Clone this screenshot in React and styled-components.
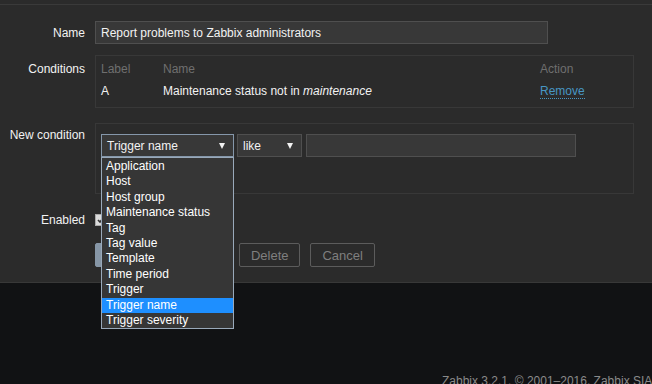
import React from "react";
import styled, { createGlobalStyle } from "styled-components";

const conditionTypes = [
  "Application",
  "Host",
  "Host group",
  "Maintenance status",
  "Tag",
  "Tag value",
  "Template",
  "Time period",
  "Trigger",
  "Trigger name",
  "Trigger severity",
];

const GlobalStyle = createGlobalStyle`
  html, body {
    margin: 0;
    padding: 0;
    background: #111214;
  }
  body {
    font-family: "Liberation Sans", Arial, sans-serif;
    font-size: 12px;
    color: #f2f2f2;
  }
`;

const Page = styled.div`
  width: 652px;
  height: 384px;
  overflow: hidden;
  display: flex;
  flex-direction: column;
`;

const Main = styled.div`
  background: #2b2b2b;
  border-bottom: 1px solid #383838;
  padding-bottom: 15px;
`;

const TopStrip = styled.div`
  height: 4px;
  border-bottom: 1px solid #3a3a3a;
`;

const Form = styled.div`
  padding: 16px 18px 0 0;
`;

const Row = styled.div`
  display: grid;
  grid-template-columns: 85px 1fr;
  column-gap: 10px;
  margin-top: ${(p) => p.top || 0}px;
`;

const Label = styled.div`
  text-align: right;
  line-height: ${(p) => p.lh || 15}px;
  padding-top: ${(p) => p.pt || 0}px;
  color: #f2f2f2;
`;

const TextInput = styled.div`
  box-sizing: border-box;
  width: ${(p) => p.w}px;
  height: 23px;
  line-height: 23px;
  padding: 0 5px;
  background: #383838;
  border: 1px solid #4f4f4f;
  color: #f2f2f2;
  overflow: hidden;
`;

const Box = styled.div`
  border: 1px solid #383838;
  padding: ${(p) => p.pad};
`;

const CondGrid = styled.div`
  display: grid;
  grid-template-columns: 62px 377px 1fr;
  line-height: 15px;
`;

const HeadCell = styled.div`
  color: #6f6f6f;
  padding-top: 6px;
`;

const Cell = styled.div`
  padding-top: 7px;
  padding-bottom: 8px;
`;

const RemoveLink = styled.span`
  color: #4796c4;
  border-bottom: 1px dotted #4796c4;
`;

const Controls = styled.div`
  display: flex;
  align-items: flex-start;
`;

const SelectWrap = styled.div`
  position: relative;
  margin-right: ${(p) => p.mr}px;
`;

const Select = styled.div`
  box-sizing: border-box;
  width: ${(p) => p.w}px;
  height: 23px;
  padding: 1px 5px 0;
  background: #383838;
  border: 1px solid ${(p) => (p.focused ? "#8597aa" : "#4f4f4f")};
  color: #f2f2f2;
  display: flex;
  justify-content: space-between;
  align-items: center;
`;

const Arrow = styled.span`
  width: 0;
  height: 0;
  border-left: 3px solid transparent;
  border-right: 3px solid transparent;
  border-top: 6px solid #f2f2f2;
  margin-right: 3px;
`;

const List = styled.ul`
  position: absolute;
  top: 100%;
  left: 0;
  z-index: 5;
  box-sizing: border-box;
  width: 133px;
  margin: 0;
  padding: 1px 0 0;
  list-style: none;
  background: #363636;
  border: 1px solid #99a9ba;
`;

const Option = styled.li`
  line-height: 15.4px;
  height: 15.4px;
  padding-left: 4px;
  white-space: nowrap;
  color: #fff;
  background: ${(p) => (p.selected ? "#1e8fff" : "transparent")};
`;

const CheckRow = styled.div`
  display: flex;
  align-items: center;
  height: 16px;
`;

const Checkbox = styled.span`
  box-sizing: border-box;
  width: 12px;
  height: 12px;
  background: #dcdcdc;
  border: 1px solid #aaa;
  display: flex;
  align-items: center;
  justify-content: center;
`;

const Buttons = styled.div`
  display: flex;
  gap: 10px;
`;

const Button = styled.div`
  box-sizing: border-box;
  height: 24px;
  line-height: 23px;
  padding: 0 11px;
  font-size: 13px;
  border-radius: 2px;
  border: 1px solid ${(p) => (p.primary ? "#8696a6" : "#5c5c5c")};
  background: ${(p) => (p.primary ? "#8696a6" : "transparent")};
  color: ${(p) => (p.primary ? "#fff" : "#7f7f7f")};
`;

const Footer = styled.div`
  flex: 1;
  background: #111214;
  padding: 91px 0 0 442px;
  line-height: 15px;
  color: #8a8a8a;
  white-space: nowrap;
`;

const App = () => {
  return (
    <Page>
      <GlobalStyle />
      <Main>
        <TopStrip />
        <Form>
          <Row>
            <Label lh={22} pt={1}>Name</Label>
            <TextInput w={453}>Report problems to Zabbix administrators</TextInput>
          </Row>

          <Row top={11}>
            <Label pt={7}>Conditions</Label>
            <Box pad="0 5px">
              <CondGrid>
                <HeadCell>Label</HeadCell>
                <HeadCell>Name</HeadCell>
                <HeadCell>Action</HeadCell>
                <Cell>A</Cell>
                <Cell>
                  Maintenance status not in <i>maintenance</i>
                </Cell>
                <Cell>
                  <RemoveLink>Remove</RemoveLink>
                </Cell>
              </CondGrid>
            </Box>
          </Row>

          <Row top={15}>
            <Label pt={5}>New condition</Label>
            <Box pad="10px 5px 36px">
              <Controls>
                <SelectWrap mr={3}>
                  <Select w={133} focused>
                    <span>Trigger name</span>
                    <Arrow />
                  </Select>
                  <List>
                    {conditionTypes.map((type) => (
                      <Option key={type} selected={type === "Trigger name"}>
                        {type}
                      </Option>
                    ))}
                  </List>
                </SelectWrap>
                <SelectWrap mr={4}>
                  <Select w={65}>
                    <span>like</span>
                    <Arrow />
                  </Select>
                </SelectWrap>
                <TextInput w={270} />
              </Controls>
            </Box>
          </Row>

          <Row top={18}>
            <Label lh={15} pt={1}>Enabled</Label>
            <CheckRow>
              <Checkbox>
                <svg width="8" height="8" viewBox="0 0 8 8">
                  <path d="M1 4l2 2 4-5" stroke="#333" strokeWidth="1.6" fill="none" />
                </svg>
              </Checkbox>
            </CheckRow>
          </Row>

          <Row top={15}>
            <div />
            <Buttons>
              <Button primary>Update</Button>
              <Button>Clone</Button>
              <Button>Delete</Button>
              <Button>Cancel</Button>
            </Buttons>
          </Row>
        </Form>
      </Main>
      <Footer>Zabbix 3.2.1. © 2001–2016, Zabbix SIA</Footer>
    </Page>
  );
};

export default App;
